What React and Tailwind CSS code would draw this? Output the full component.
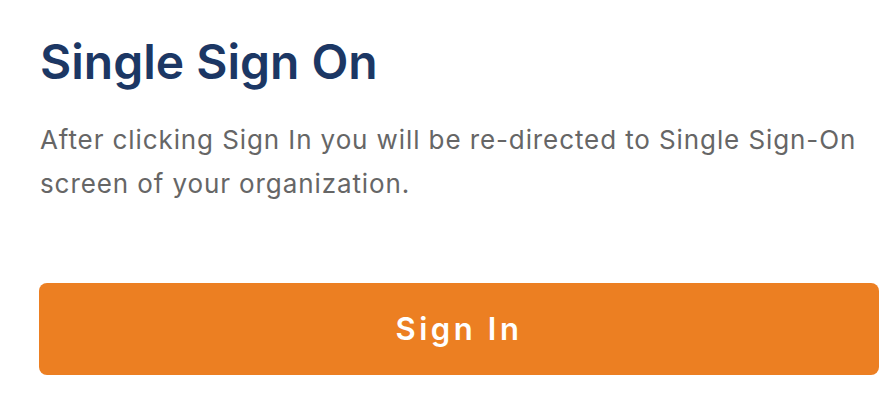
import React from 'react';

export const App = () => {
  return (
    <div className="min-h-screen bg-white font-['Inter',sans-serif]">
      <div className="pl-10 pr-[10px] pt-[33px]">
        <h1 className="text-[48px] font-semibold leading-[58px] text-[#1c3764]">Single Sign On</h1>
        <p className="mt-[27px] text-[26px] leading-[44px] tracking-[0.9px] text-[#666666]">
          After clicking Sign In you will be re-directed to Single Sign-On screen of your organization.
        </p>
      </div>
      <div className="pl-[39px] pr-[10px] pt-[77px]">
        <button className="flex h-[92px] w-full items-center justify-center rounded-lg bg-[#ec7f22] text-[31px] font-semibold tracking-[3.6px] text-white">
          Sign In
        </button>
      </div>
    </div>
  );
};

export default App;
